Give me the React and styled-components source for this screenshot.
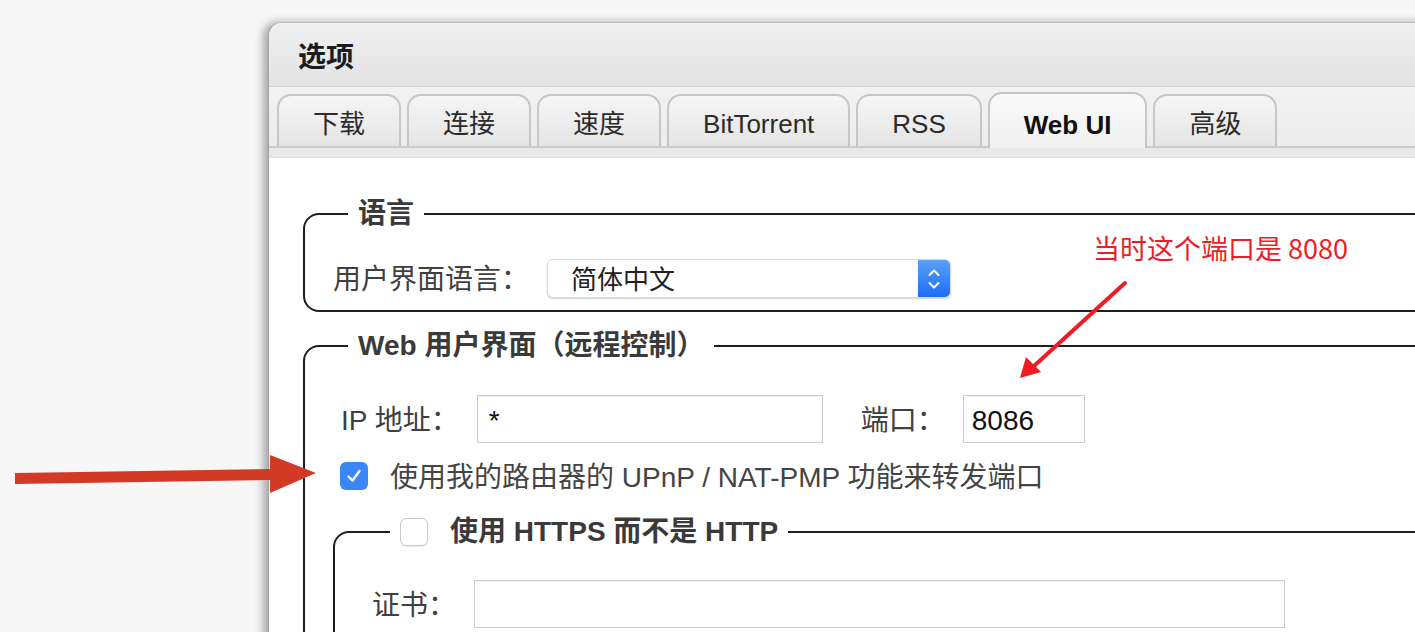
import styled, { createGlobalStyle } from 'styled-components';

const GlobalStyle = createGlobalStyle`
  html, body {
    margin: 0;
    padding: 0;
    background: #f7f7f7;
  }
  body {
    font-family: "Liberation Sans", "Noto Sans CJK SC", sans-serif;
  }
`;

const Page = styled.div`
  position: relative;
  width: 1415px;
  height: 632px;
  overflow: hidden;
  background: #f7f7f7;
  padding: 22px 0 0 268px;
  box-sizing: border-box;
`;

const Window = styled.div`
  width: 1250px;
  height: 700px;
  background: #fff;
  border-top-left-radius: 14px;
  border-left: 1px solid #a0a0a0;
  border-top: 1px solid #bdbdbd;
  box-shadow: -5px 0 8px rgba(0, 0, 0, 0.32);
  overflow: hidden;
  display: flex;
  flex-direction: column;
`;

const TitleBar = styled.div`
  height: 63px;
  flex: none;
  display: flex;
  align-items: center;
  padding-left: 29px;
  background: linear-gradient(#efefef, #e4e4e4);
  border-bottom: 1px solid #d2d2d2;
  font-size: 28px;
  font-weight: bold;
  color: #1c1c1c;
`;

const TabStrip = styled.div`
  height: 61px;
  flex: none;
  display: flex;
  align-items: flex-end;
  gap: 6px;
  padding-left: 8px;
  background: linear-gradient(#f2f2f2, #ececec);
  border-bottom: 2px solid #cbcbcb;
  box-sizing: border-box;
`;

const Tab = styled.div`
  height: ${(p) => (p.$active ? '56px' : '52px')};
  margin-bottom: ${(p) => (p.$active ? '-2px' : '0')};
  padding: ${(p) => (p.$active ? '7px' : '6px')} 34px 0;
  display: flex;
  align-items: center;
  box-sizing: border-box;
  border: 2px solid #c6c6c6;
  border-bottom: none;
  border-radius: 14px 14px 0 0;
  background: ${(p) =>
    p.$active ? 'linear-gradient(#fafafa, #f1f1f1)' : 'linear-gradient(#f5f5f5, #e5e5e5)'};
  font-size: 26px;
  font-weight: ${(p) => (p.$active ? 'bold' : 'normal')};
  color: ${(p) => (p.$active ? '#111' : '#2b2b2b')};
  line-height: 1;
`;

const SubStrip = styled.div`
  height: 9px;
  flex: none;
  background: #e9e9e9;
  border-bottom: 1px solid #dcdcdc;
`;

const Content = styled.div`
  flex: 1;
  background: #fff;
  padding: 36px 0 0 34px;
`;

const Group = styled.fieldset`
  margin: ${(p) => p.$mt || 0}px 0 0 0;
  padding: ${(p) => p.$pt || 0}px 0 ${(p) => p.$pb || 0}px ${(p) => p.$pl || 28}px;
  border: 2px solid #1e1e1e;
  border-radius: 16px;
  min-width: 0;
`;

const Legend = styled.legend`
  margin-left: ${(p) => p.$ml || 0}px;
  padding: 0 10px;
  font-size: 28px;
  font-weight: bold;
  line-height: 40px;
  color: #3a3a3a;
  display: flex;
  align-items: center;
  gap: 22px;
`;

const Row = styled.div`
  display: flex;
  align-items: center;
  margin-left: ${(p) => p.$ml || 0}px;
  margin-top: ${(p) => p.$mt || 0}px;
  height: ${(p) => p.$h || 48}px;
`;

const Label = styled.span`
  font-size: 28px;
  color: #404040;
  line-height: 1;
  margin-right: 18px;
  padding-top: 3px;
  white-space: nowrap;
`;

const TextInput = styled.input`
  width: ${(p) => p.$w}px;
  height: 48px;
  box-sizing: border-box;
  border: 1px solid #cdcdcd;
  box-shadow: inset 0 1px 1px rgba(0, 0, 0, 0.06);
  padding: 3px ${(p) => p.$px || 11}px 0;
  font-family: "Liberation Sans", "Noto Sans CJK SC", sans-serif;
  font-size: 28px;
  color: #111;
  background: #fff;
  outline: none;
  margin-right: ${(p) => p.$mr || 0}px;
`;

const Select = styled.div`
  width: 404px;
  height: 39px;
  box-sizing: border-box;
  border: 1px solid #d8d8d8;
  border-radius: 6px;
  box-shadow: 0 1px 2px rgba(0, 0, 0, 0.18);
  display: flex;
  align-items: center;
  overflow: hidden;
  background: #fff;
`;

const SelectText = styled.span`
  flex: 1;
  padding: 3px 0 0 23px;
  font-size: 26px;
  color: #222;
  line-height: 1;
`;

const SelectButton = styled.div`
  width: 32px;
  height: 100%;
  background: linear-gradient(#5a9ffb, #1b6ef6);
  display: flex;
  align-items: center;
  justify-content: center;
`;

const Check = styled.span`
  width: 28px;
  height: 28px;
  box-sizing: border-box;
  border-radius: 6px;
  flex: none;
  display: inline-flex;
  align-items: center;
  justify-content: center;
  background: ${(p) => (p.$on ? '#3a86f6' : '#fff')};
  border: ${(p) => (p.$on ? 'none' : '1.5px solid #c9c9c9')};
  box-shadow: ${(p) => (p.$on ? 'none' : '0 1px 1px rgba(0,0,0,0.08)')};
  margin-right: ${(p) => p.$mr || 0}px;
`;

const CheckText = styled.span`
  font-size: 28px;
  color: #444;
  line-height: 1;
  padding-top: 3px;
  white-space: nowrap;
`;

const Note = styled.div`
  position: absolute;
  left: 1093px;
  top: 230px;
  font-family: "Noto Sans CJK SC", sans-serif;
  font-size: 27px;
  line-height: 36px;
  color: #ee1d25;
  white-space: nowrap;
`;

const Overlay = styled.svg`
  position: absolute;
  left: 0;
  top: 0;
  pointer-events: none;
`;

function Checkbox({ on, mr }) {
  return (
    <Check $on={on} $mr={mr}>
      {on && (
        <svg width="18" height="18" viewBox="0 0 18 18">
          <path d="M3.5 9.5 L7.5 13.5 L14.5 4" fill="none" stroke="#fff" strokeWidth="2.4" strokeLinecap="round" strokeLinejoin="round" />
        </svg>
      )}
    </Check>
  );
}

export default function App() {
  const tabs = ['下载', '连接', '速度', 'BitTorrent', 'RSS', 'Web UI', '高级'];
  return (
    <Page>
      <GlobalStyle />
      <Window>
        <TitleBar>选项</TitleBar>
        <TabStrip>
          {tabs.map((t) => (
            <Tab key={t} $active={t === 'Web UI'}>{t}</Tab>
          ))}
        </TabStrip>
        <SubStrip />
        <Content>
          <Group $pt={25} $pb={12}>
            <Legend $ml={15}>语言</Legend>
            <Row $h={39}>
              <Label>用户界面语言：</Label>
              <Select>
                <SelectText>简体中文</SelectText>
                <SelectButton>
                  <svg width="16" height="26" viewBox="0 0 16 26">
                    <path d="M3.5 9 L8 4.5 L12.5 9 M3.5 17 L8 21.5 L12.5 17" fill="none" stroke="#fff" strokeWidth="2" strokeLinecap="round" strokeLinejoin="round" />
                  </svg>
                </SelectButton>
              </Select>
            </Row>
          </Group>
          <Group $mt={14} $pt={29} $pb={80}>
            <Legend $ml={15}>Web 用户界面（远程控制）</Legend>
            <Row $ml={8}>
              <Label>IP 地址：</Label>
              <TextInput readOnly value="*" $w={346} $mr={38} />
              <Label>端口：</Label>
              <TextInput readOnly value="8086" $w={122} $px={8} />
            </Row>
            <Row $ml={7} $mt={19} $h={28}>
              <Checkbox on mr={22} />
              <CheckText>使用我的路由器的 UPnP / NAT-PMP 功能来转发端口</CheckText>
            </Row>
            <Group $mt={22} $pt={28} $pb={40} $pl={37}>
              <Legend $ml={18}>
                <Checkbox />
                <span>使用 HTTPS 而不是 HTTP</span>
              </Legend>
              <Row>
                <Label>证书：</Label>
                <TextInput readOnly value="" $w={811} />
              </Row>
            </Group>
          </Group>
        </Content>
      </Window>
      <Note>当时这个端口是 8080</Note>
      <Overlay width="1415" height="632" viewBox="0 0 1415 632">
        <line x1="1125" y1="283" x2="1034" y2="366" stroke="#ee1d25" strokeWidth="4" strokeLinecap="round" />
        <polygon points="1020,378 1026,357 1041,372" fill="#ee1d25" />
        <polygon points="15,473 270,469 270,455 316,473 270,493 270,480 15,484" fill="#d33a26" />
      </Overlay>
    </Page>
  );
}
